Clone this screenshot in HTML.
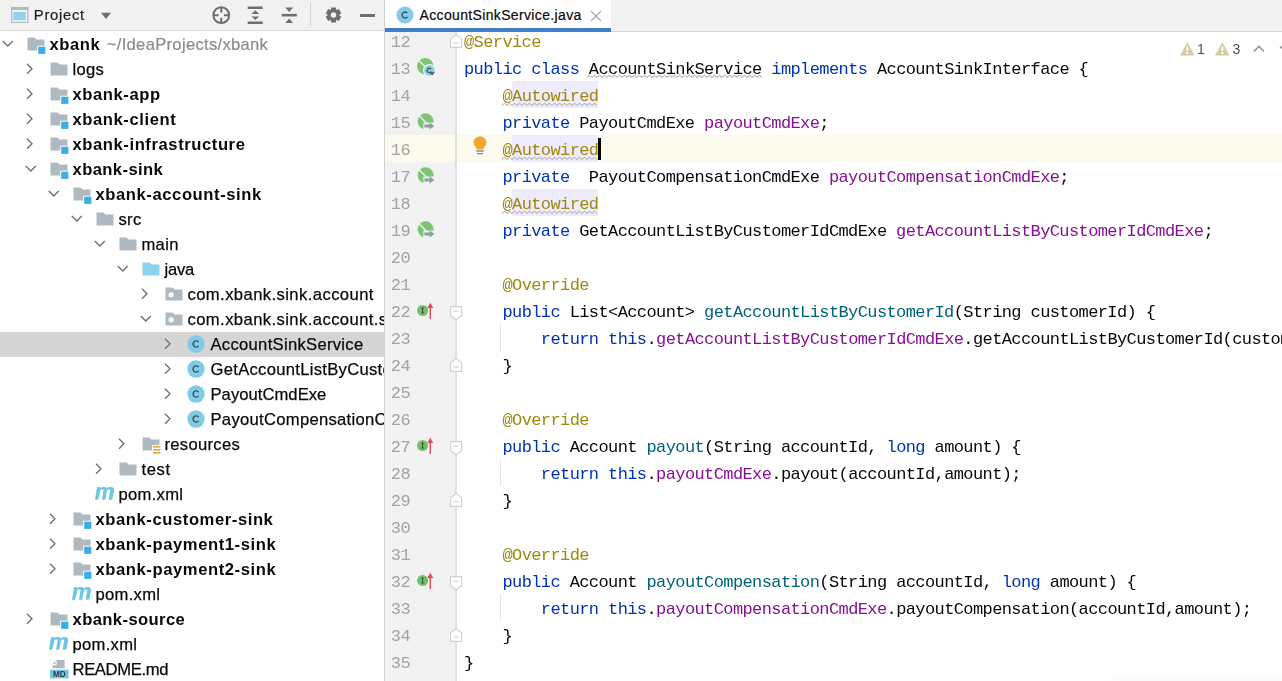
<!DOCTYPE html>
<html><head><meta charset="utf-8"><style>
*{margin:0;padding:0;box-sizing:border-box}
html,body{width:1282px;height:681px;overflow:hidden;background:#fff}
body{position:relative;font-family:"Liberation Sans",sans-serif;-webkit-font-smoothing:antialiased}
.ic{position:absolute;display:block;overflow:visible}
#left{will-change:transform;position:absolute;left:0;top:0;width:384px;height:681px;overflow:hidden;background:#fff}
#hdr{position:absolute;left:0;top:0;width:384px;height:31px;background:#f2f2f2;border-bottom:1px solid #d6d6d6}
#hdr .title{-webkit-text-stroke:0.2px currentColor;position:absolute;left:33.8px;top:5.3px;font-size:14.8px;letter-spacing:0.72px;color:#1e1e1e;line-height:20px}
.sel{position:absolute;left:0;width:384px;height:25px;background:#d5d5d5}
.t,.tb{position:absolute;height:25px;line-height:25px;font-size:16.6px;color:#0a0a0a;white-space:nowrap;letter-spacing:0.3px}
.tb{font-weight:bold;letter-spacing:0.58px}
.t{-webkit-text-stroke:0.25px currentColor}
.gr{font-weight:normal;color:#8c8c8c;letter-spacing:0.3px;-webkit-text-stroke:0.2px currentColor}
.mi{position:absolute;width:20px;height:15px;font:italic bold 21px/15px "Liberation Sans",sans-serif;color:#6cc5ea;letter-spacing:-1px}
#vsep{position:absolute;left:384px;top:0;width:1px;height:681px;background:#d1d1d1}
#tabs{position:absolute;left:385px;top:0;width:897px;height:32px;background:#f2f2f2;border-bottom:1px solid #d6d6d6}
#tab{position:absolute;left:385px;top:0;width:226px;height:32px;background:#fff}
#tabline{position:absolute;left:385px;top:28px;width:226px;height:4px;background:#3f7ecb}
#tabtxt{-webkit-text-stroke:0.2px currentColor;position:absolute;left:419.5px;top:5px;font-size:14px;line-height:20px;color:#0a0a0a;letter-spacing:0.35px}
#gutter{position:absolute;left:385px;top:32px;width:70px;height:649px;background:#f2f2f2}
#gline{position:absolute;left:455px;top:32px;width:2px;height:649px;background:#e0e0e0}
#editor{position:absolute;left:0;top:32px;width:1282px;height:649px;overflow:hidden}
#einner{will-change:transform;position:absolute;left:0;top:-32px;width:1282px;height:681px}
.cur{position:absolute;left:457px;width:826px;height:27px;background:#fcfaed}
.gcur{position:absolute;left:385px;width:70px;height:27px;background:#fcfaed}
.cl{position:absolute;left:464px;height:27px;line-height:27px;font-family:"Liberation Mono",monospace;font-size:17px;letter-spacing:-0.6px;color:#080808;white-space:pre}
.ln{position:absolute;left:385px;width:25px;text-align:right;height:27px;line-height:27px;font-family:"Liberation Mono",monospace;font-size:17px;letter-spacing:-0.6px;color:#a3a3a3}
.k{color:#0033b3} .a{color:#9e880d} .f{color:#871094} .m{color:#00627a}
.hl{background:#edebfc}
.lhl{position:absolute;height:27px;background:#edebfc}
</style></head><body>
<div id="left">
<div id="hdr">
 <svg class="ic" style="left:10.5px;top:7px" width="18" height="16" viewBox="0 0 18 16"><rect x="0.6" y="0.6" width="16.2" height="14.8" fill="#f7f7f7" stroke="#b0bac2" stroke-width="1.2"/><rect x="0" y="0" width="17.4" height="3" fill="#b0bac2"/><rect x="2.2" y="4.9" width="12.6" height="8.3" fill="#90d2ec"/></svg>
 <div class="title">Project</div>
 <svg class="ic" style="left:100px;top:12px" width="12" height="8" viewBox="0 0 12 8"><path d="M1 0.8H11L6 7Z" fill="#6e6e6e"/></svg>
 <svg class="ic" style="left:212px;top:6px" width="19" height="19" viewBox="0 0 19 19"><circle cx="9.25" cy="9.15" r="7.9" fill="none" stroke="#6e6e6e" stroke-width="2"/><path d="M9.25 1.5V6.5M9.25 11.8V17M1.5 9.15H6.5M12 9.15H17" stroke="#6e6e6e" stroke-width="2"/></svg>
 <svg class="ic" style="left:247px;top:6px" width="17" height="19" viewBox="0 0 17 19"><rect x="0.7" y="0.5" width="15" height="2.5" fill="#6e6e6e"/><rect x="0.7" y="15.5" width="15" height="2.5" fill="#6e6e6e"/><path d="M4.4 7.9H12.2L8.3 4.2Z M4.4 10.4H12.2L8.3 14.1Z" fill="#6e6e6e"/></svg>
 <svg class="ic" style="left:281px;top:6px" width="17" height="19" viewBox="0 0 17 19"><rect x="0.8" y="7.9" width="15" height="2.6" fill="#6e6e6e"/><path d="M4.3 1.6H12.1L8.2 6Z M4.3 16.9H12.1L8.2 12.4Z" fill="#6e6e6e"/></svg>
 <div style="position:absolute;left:310px;top:3px;width:1px;height:23px;background:#d0d0d0"></div>
 <svg class="ic" style="left:324.7px;top:6px" width="17" height="18" viewBox="0 0 17 18"><path fill="#6e6e6e" fill-rule="evenodd" d="M5.72 3.91 L6.07 1.43 L10.93 1.43 L11.28 3.91 L11.52 4.05 L13.84 3.11 L16.27 7.31 L14.30 8.86 L14.30 9.14 L16.27 10.69 L13.84 14.89 L11.52 13.95 L11.28 14.09 L10.93 16.57 L6.07 16.57 L5.72 14.09 L5.48 13.95 L3.16 14.89 L0.73 10.69 L2.70 9.14 L2.70 8.86 L0.73 7.31 L3.16 3.11 L5.48 4.05Z M11.30 9.00 A2.8 2.8 0 1 0 5.70 9.00 A2.8 2.8 0 1 0 11.30 9.00Z"/></svg>
 <div style="position:absolute;left:359.5px;top:14px;width:15px;height:2.5px;background:#6e6e6e"></div>
</div>
<svg class="ic" style="left:2.0px;top:40.0px" width="12" height="8" viewBox="0 0 12 8"><path d="M0.8 1L5.8 6L10.8 1" fill="none" stroke="#6e6e6e" stroke-width="1.3"/></svg><svg class="ic" style="left:26.5px;top:37.0px" width="20" height="18" viewBox="0 0 20 18"><path d="M0.5 0.5H7.5L9.5 2.5H17.5V13.5H0.5Z" fill="#afb9c1"/><rect x="10.2" y="8.7" width="9" height="9" fill="#fff"/><rect x="11.2" y="9.7" width="7.2" height="7.2" fill="#3daee3"/></svg><div class="tb" style="left:49.5px;top:32px;">xbank<span class="gr" style="margin-left:1.5px"> ~/IdeaProjects/xbank</span></div><svg class="ic" style="left:26.1px;top:62.9px" width="8" height="12" viewBox="0 0 8 12"><path d="M1 0.8L6 5.8L1 10.8" fill="none" stroke="#6e6e6e" stroke-width="1.3"/></svg><svg class="ic" style="left:49.5px;top:62.0px" width="18" height="14" viewBox="0 0 18 14"><path d="M0.5 0.5H7.5L9.5 2.5H17.5V13.5H0.5Z" fill="#afb9c1"/></svg><div class="t" style="left:72.5px;top:57px;">logs</div><svg class="ic" style="left:26.1px;top:87.9px" width="8" height="12" viewBox="0 0 8 12"><path d="M1 0.8L6 5.8L1 10.8" fill="none" stroke="#6e6e6e" stroke-width="1.3"/></svg><svg class="ic" style="left:49.5px;top:87.0px" width="20" height="18" viewBox="0 0 20 18"><path d="M0.5 0.5H7.5L9.5 2.5H17.5V13.5H0.5Z" fill="#afb9c1"/><rect x="10.2" y="8.7" width="9" height="9" fill="#fff"/><rect x="11.2" y="9.7" width="7.2" height="7.2" fill="#3daee3"/></svg><div class="tb" style="left:72.5px;top:82px;">xbank-app</div><svg class="ic" style="left:26.1px;top:112.9px" width="8" height="12" viewBox="0 0 8 12"><path d="M1 0.8L6 5.8L1 10.8" fill="none" stroke="#6e6e6e" stroke-width="1.3"/></svg><svg class="ic" style="left:49.5px;top:112.0px" width="20" height="18" viewBox="0 0 20 18"><path d="M0.5 0.5H7.5L9.5 2.5H17.5V13.5H0.5Z" fill="#afb9c1"/><rect x="10.2" y="8.7" width="9" height="9" fill="#fff"/><rect x="11.2" y="9.7" width="7.2" height="7.2" fill="#3daee3"/></svg><div class="tb" style="left:72.5px;top:107px;">xbank-client</div><svg class="ic" style="left:26.1px;top:137.9px" width="8" height="12" viewBox="0 0 8 12"><path d="M1 0.8L6 5.8L1 10.8" fill="none" stroke="#6e6e6e" stroke-width="1.3"/></svg><svg class="ic" style="left:49.5px;top:137.0px" width="20" height="18" viewBox="0 0 20 18"><path d="M0.5 0.5H7.5L9.5 2.5H17.5V13.5H0.5Z" fill="#afb9c1"/><rect x="10.2" y="8.7" width="9" height="9" fill="#fff"/><rect x="11.2" y="9.7" width="7.2" height="7.2" fill="#3daee3"/></svg><div class="tb" style="left:72.5px;top:132px;">xbank-infrastructure</div><svg class="ic" style="left:25.0px;top:165.0px" width="12" height="8" viewBox="0 0 12 8"><path d="M0.8 1L5.8 6L10.8 1" fill="none" stroke="#6e6e6e" stroke-width="1.3"/></svg><svg class="ic" style="left:49.5px;top:162.0px" width="20" height="18" viewBox="0 0 20 18"><path d="M0.5 0.5H7.5L9.5 2.5H17.5V13.5H0.5Z" fill="#afb9c1"/><rect x="10.2" y="8.7" width="9" height="9" fill="#fff"/><rect x="11.2" y="9.7" width="7.2" height="7.2" fill="#3daee3"/></svg><div class="tb" style="left:72.5px;top:157px;letter-spacing:0.4px;">xbank-sink</div><svg class="ic" style="left:48.0px;top:190.0px" width="12" height="8" viewBox="0 0 12 8"><path d="M0.8 1L5.8 6L10.8 1" fill="none" stroke="#6e6e6e" stroke-width="1.3"/></svg><svg class="ic" style="left:72.5px;top:187.0px" width="20" height="18" viewBox="0 0 20 18"><path d="M0.5 0.5H7.5L9.5 2.5H17.5V13.5H0.5Z" fill="#afb9c1"/><rect x="10.2" y="8.7" width="9" height="9" fill="#fff"/><rect x="11.2" y="9.7" width="7.2" height="7.2" fill="#3daee3"/></svg><div class="tb" style="left:95.5px;top:182px;">xbank-account-sink</div><svg class="ic" style="left:71.0px;top:215.0px" width="12" height="8" viewBox="0 0 12 8"><path d="M0.8 1L5.8 6L10.8 1" fill="none" stroke="#6e6e6e" stroke-width="1.3"/></svg><svg class="ic" style="left:95.5px;top:212.0px" width="18" height="14" viewBox="0 0 18 14"><path d="M0.5 0.5H7.5L9.5 2.5H17.5V13.5H0.5Z" fill="#afb9c1"/></svg><div class="t" style="left:118.5px;top:207px;">src</div><svg class="ic" style="left:94.0px;top:240.0px" width="12" height="8" viewBox="0 0 12 8"><path d="M0.8 1L5.8 6L10.8 1" fill="none" stroke="#6e6e6e" stroke-width="1.3"/></svg><svg class="ic" style="left:118.5px;top:237.0px" width="18" height="14" viewBox="0 0 18 14"><path d="M0.5 0.5H7.5L9.5 2.5H17.5V13.5H0.5Z" fill="#afb9c1"/></svg><div class="t" style="left:141.5px;top:232px;">main</div><svg class="ic" style="left:117.0px;top:265.0px" width="12" height="8" viewBox="0 0 12 8"><path d="M0.8 1L5.8 6L10.8 1" fill="none" stroke="#6e6e6e" stroke-width="1.3"/></svg><svg class="ic" style="left:141.5px;top:262.0px" width="18" height="14" viewBox="0 0 18 14"><path d="M0.5 0.5H7.5L9.5 2.5H17.5V13.5H0.5Z" fill="#8dd2ec"/></svg><div class="t" style="left:164.5px;top:257px;letter-spacing:-0.2px;">java</div><svg class="ic" style="left:141.1px;top:287.9px" width="8" height="12" viewBox="0 0 8 12"><path d="M1 0.8L6 5.8L1 10.8" fill="none" stroke="#6e6e6e" stroke-width="1.3"/></svg><svg class="ic" style="left:164.5px;top:287.0px" width="18" height="14" viewBox="0 0 18 14"><path d="M0.5 0.5H7.5L9.5 2.5H17.5V13.5H0.5Z" fill="#afb9c1"/><circle cx="6.2" cy="7.8" r="2.6" fill="#fff"/></svg><div class="t" style="left:187.5px;top:282px;letter-spacing:0.42px;">com.xbank.sink.account</div><svg class="ic" style="left:140.0px;top:315.0px" width="12" height="8" viewBox="0 0 12 8"><path d="M0.8 1L5.8 6L10.8 1" fill="none" stroke="#6e6e6e" stroke-width="1.3"/></svg><svg class="ic" style="left:164.5px;top:312.0px" width="18" height="14" viewBox="0 0 18 14"><path d="M0.5 0.5H7.5L9.5 2.5H17.5V13.5H0.5Z" fill="#afb9c1"/><circle cx="6.2" cy="7.8" r="2.6" fill="#fff"/></svg><div class="t" style="left:187.5px;top:307px;letter-spacing:0.42px;">com.xbank.sink.account.service</div><div class="sel" style="top:332px"></div><svg class="ic" style="left:164.1px;top:337.9px" width="8" height="12" viewBox="0 0 8 12"><path d="M1 0.8L6 5.8L1 10.8" fill="none" stroke="#6e6e6e" stroke-width="1.3"/></svg><svg class="ic" style="left:186.9px;top:334.5px" width="18" height="18" viewBox="0 0 18 18"><circle cx="9" cy="9" r="8.7" fill="#80cbe6"/><path d="M11.6 7.1A3.1 3.1 0 1 0 11.6 10.9" fill="none" stroke="#3e4f57" stroke-width="1.4"/></svg><div class="t" style="left:210.5px;top:332px;">AccountSinkService</div><svg class="ic" style="left:164.1px;top:362.9px" width="8" height="12" viewBox="0 0 8 12"><path d="M1 0.8L6 5.8L1 10.8" fill="none" stroke="#6e6e6e" stroke-width="1.3"/></svg><svg class="ic" style="left:186.9px;top:359.5px" width="18" height="18" viewBox="0 0 18 18"><circle cx="9" cy="9" r="8.7" fill="#80cbe6"/><path d="M11.6 7.1A3.1 3.1 0 1 0 11.6 10.9" fill="none" stroke="#3e4f57" stroke-width="1.4"/></svg><div class="t" style="left:210.5px;top:357px;">GetAccountListByCustomerIdCmdExe</div><svg class="ic" style="left:164.1px;top:387.9px" width="8" height="12" viewBox="0 0 8 12"><path d="M1 0.8L6 5.8L1 10.8" fill="none" stroke="#6e6e6e" stroke-width="1.3"/></svg><svg class="ic" style="left:186.9px;top:384.5px" width="18" height="18" viewBox="0 0 18 18"><circle cx="9" cy="9" r="8.7" fill="#80cbe6"/><path d="M11.6 7.1A3.1 3.1 0 1 0 11.6 10.9" fill="none" stroke="#3e4f57" stroke-width="1.4"/></svg><div class="t" style="left:210.5px;top:382px;letter-spacing:0.05px;">PayoutCmdExe</div><svg class="ic" style="left:164.1px;top:412.9px" width="8" height="12" viewBox="0 0 8 12"><path d="M1 0.8L6 5.8L1 10.8" fill="none" stroke="#6e6e6e" stroke-width="1.3"/></svg><svg class="ic" style="left:186.9px;top:409.5px" width="18" height="18" viewBox="0 0 18 18"><circle cx="9" cy="9" r="8.7" fill="#80cbe6"/><path d="M11.6 7.1A3.1 3.1 0 1 0 11.6 10.9" fill="none" stroke="#3e4f57" stroke-width="1.4"/></svg><div class="t" style="left:210.5px;top:407px;">PayoutCompensationCmdExe</div><svg class="ic" style="left:118.1px;top:437.9px" width="8" height="12" viewBox="0 0 8 12"><path d="M1 0.8L6 5.8L1 10.8" fill="none" stroke="#6e6e6e" stroke-width="1.3"/></svg><svg class="ic" style="left:141.5px;top:437.0px" width="20" height="18" viewBox="0 0 20 18"><path d="M0.5 0.5H7.5L9.5 2.5H17.5V13.5H0.5Z" fill="#afb9c1"/><rect x="10" y="8" width="10" height="10" fill="#fff"/><rect x="11" y="9" width="7.5" height="1.6" fill="#e3a440"/><rect x="11" y="12" width="7.5" height="1.6" fill="#e3a440"/><rect x="11" y="15" width="7.5" height="1.6" fill="#e3a440"/></svg><div class="t" style="left:164.5px;top:432px;">resources</div><svg class="ic" style="left:95.1px;top:462.9px" width="8" height="12" viewBox="0 0 8 12"><path d="M1 0.8L6 5.8L1 10.8" fill="none" stroke="#6e6e6e" stroke-width="1.3"/></svg><svg class="ic" style="left:118.5px;top:462.0px" width="18" height="14" viewBox="0 0 18 14"><path d="M0.5 0.5H7.5L9.5 2.5H17.5V13.5H0.5Z" fill="#afb9c1"/></svg><div class="t" style="left:141.5px;top:457px;letter-spacing:0.6px;">test</div><svg class="ic" style="left:94.9px;top:487.2px" width="20" height="13" viewBox="0 0 20 13"><path d="M0 12.7L2.1 0L5.2 0L5.05 0.9C6 0.3 7.3 0 8.6 0C10.2 0 11.3 0.5 11.7 1.4C12.8 0.4 14.2 0 15.7 0C18.2 0 19.4 1.3 19.1 3.2L17.2 12.7L13.6 12.7L15.1 3.8C15.2 3 14.8 2.6 14 2.6C13.1 2.6 12.2 3.1 11.9 3.9L10.2 12.7L7 12.7L8.5 3.8C8.6 3 8.2 2.6 7.4 2.6C6.5 2.6 5.6 3.1 5.3 3.9L3.1 12.7Z" fill="#6cc6e8"/></svg><div class="t" style="left:118.5px;top:482px;">pom.xml</div><svg class="ic" style="left:49.1px;top:512.9px" width="8" height="12" viewBox="0 0 8 12"><path d="M1 0.8L6 5.8L1 10.8" fill="none" stroke="#6e6e6e" stroke-width="1.3"/></svg><svg class="ic" style="left:72.5px;top:512.0px" width="20" height="18" viewBox="0 0 20 18"><path d="M0.5 0.5H7.5L9.5 2.5H17.5V13.5H0.5Z" fill="#afb9c1"/><rect x="10.2" y="8.7" width="9" height="9" fill="#fff"/><rect x="11.2" y="9.7" width="7.2" height="7.2" fill="#3daee3"/></svg><div class="tb" style="left:95.5px;top:507px;">xbank-customer-sink</div><svg class="ic" style="left:49.1px;top:537.9px" width="8" height="12" viewBox="0 0 8 12"><path d="M1 0.8L6 5.8L1 10.8" fill="none" stroke="#6e6e6e" stroke-width="1.3"/></svg><svg class="ic" style="left:72.5px;top:537.0px" width="20" height="18" viewBox="0 0 20 18"><path d="M0.5 0.5H7.5L9.5 2.5H17.5V13.5H0.5Z" fill="#afb9c1"/><rect x="10.2" y="8.7" width="9" height="9" fill="#fff"/><rect x="11.2" y="9.7" width="7.2" height="7.2" fill="#3daee3"/></svg><div class="tb" style="left:95.5px;top:532px;">xbank-payment1-sink</div><svg class="ic" style="left:49.1px;top:562.9px" width="8" height="12" viewBox="0 0 8 12"><path d="M1 0.8L6 5.8L1 10.8" fill="none" stroke="#6e6e6e" stroke-width="1.3"/></svg><svg class="ic" style="left:72.5px;top:562.0px" width="20" height="18" viewBox="0 0 20 18"><path d="M0.5 0.5H7.5L9.5 2.5H17.5V13.5H0.5Z" fill="#afb9c1"/><rect x="10.2" y="8.7" width="9" height="9" fill="#fff"/><rect x="11.2" y="9.7" width="7.2" height="7.2" fill="#3daee3"/></svg><div class="tb" style="left:95.5px;top:557px;">xbank-payment2-sink</div><svg class="ic" style="left:71.9px;top:587.2px" width="20" height="13" viewBox="0 0 20 13"><path d="M0 12.7L2.1 0L5.2 0L5.05 0.9C6 0.3 7.3 0 8.6 0C10.2 0 11.3 0.5 11.7 1.4C12.8 0.4 14.2 0 15.7 0C18.2 0 19.4 1.3 19.1 3.2L17.2 12.7L13.6 12.7L15.1 3.8C15.2 3 14.8 2.6 14 2.6C13.1 2.6 12.2 3.1 11.9 3.9L10.2 12.7L7 12.7L8.5 3.8C8.6 3 8.2 2.6 7.4 2.6C6.5 2.6 5.6 3.1 5.3 3.9L3.1 12.7Z" fill="#6cc6e8"/></svg><div class="t" style="left:95.5px;top:582px;">pom.xml</div><svg class="ic" style="left:26.1px;top:612.9px" width="8" height="12" viewBox="0 0 8 12"><path d="M1 0.8L6 5.8L1 10.8" fill="none" stroke="#6e6e6e" stroke-width="1.3"/></svg><svg class="ic" style="left:49.5px;top:612.0px" width="20" height="18" viewBox="0 0 20 18"><path d="M0.5 0.5H7.5L9.5 2.5H17.5V13.5H0.5Z" fill="#afb9c1"/><rect x="10.2" y="8.7" width="9" height="9" fill="#fff"/><rect x="11.2" y="9.7" width="7.2" height="7.2" fill="#3daee3"/></svg><div class="tb" style="left:72.5px;top:607px;letter-spacing:0.4px;">xbank-source</div><svg class="ic" style="left:48.9px;top:637.2px" width="20" height="13" viewBox="0 0 20 13"><path d="M0 12.7L2.1 0L5.2 0L5.05 0.9C6 0.3 7.3 0 8.6 0C10.2 0 11.3 0.5 11.7 1.4C12.8 0.4 14.2 0 15.7 0C18.2 0 19.4 1.3 19.1 3.2L17.2 12.7L13.6 12.7L15.1 3.8C15.2 3 14.8 2.6 14 2.6C13.1 2.6 12.2 3.1 11.9 3.9L10.2 12.7L7 12.7L8.5 3.8C8.6 3 8.2 2.6 7.4 2.6C6.5 2.6 5.6 3.1 5.3 3.9L3.1 12.7Z" fill="#6cc6e8"/></svg><div class="t" style="left:72.5px;top:632px;">pom.xml</div><svg class="ic" style="left:49.5px;top:659.5px" width="20" height="20" viewBox="0 0 20 20"><path d="M6.6 0H14.7V8.2H2.6V4Z" fill="#afb9c1"/><path d="M6 0.6V4.6H2" fill="none" stroke="#fff" stroke-width="1.2"/><rect x="0" y="9.7" width="18.6" height="8.7" fill="#75c7e8"/><text x="9.3" y="17.2" font-family="Liberation Sans" font-weight="bold" font-size="8.2" text-anchor="middle" fill="#2d3b42">MD</text></svg><div class="t" style="left:72.5px;top:657px;letter-spacing:-0.35px;">README.md</div>
</div>
<div id="vsep"></div>
<div id="tabs"></div>
<div id="tab"></div>
<div id="tabline"></div>
<svg class="ic" style="left:396px;top:6px" width="18" height="18" viewBox="0 0 18 18"><circle cx="9" cy="9" r="8.6" fill="#84cde8"/><path d="M11.5 7.2A3 3 0 1 0 11.5 10.8" fill="none" stroke="#3e4f57" stroke-width="1.4"/></svg>
<div id="tabtxt">AccountSinkService.java</div>
<svg class="ic" style="left:590px;top:10px" width="12" height="12" viewBox="0 0 12 12"><path d="M1 1L11 11M11 1L1 11" stroke="#a8a8a8" stroke-width="1.2"/></svg>
<div id="editor"><div id="einner">
<div id="gutter" style="top:32px"></div>
<div class="ln" style="top:29px">12</div><div class="ln" style="top:56px">13</div><div class="ln" style="top:83px">14</div><div class="ln" style="top:110px">15</div><div class="gcur" style="top:135px"></div><div class="ln" style="top:137px">16</div><div class="ln" style="top:164px">17</div><div class="ln" style="top:191px">18</div><div class="ln" style="top:218px">19</div><div class="ln" style="top:245px">20</div><div class="ln" style="top:272px">21</div><div class="ln" style="top:299px">22</div><div class="ln" style="top:326px">23</div><div class="ln" style="top:353px">24</div><div class="ln" style="top:380px">25</div><div class="ln" style="top:407px">26</div><div class="ln" style="top:434px">27</div><div class="ln" style="top:461px">28</div><div class="ln" style="top:488px">29</div><div class="ln" style="top:515px">30</div><div class="ln" style="top:542px">31</div><div class="ln" style="top:569px">32</div><div class="ln" style="top:596px">33</div><div class="ln" style="top:623px">34</div><div class="ln" style="top:650px">35</div>
<div class="cl" style="top:29px"><span class="a">@Service</span></div><div class="cl" style="top:56px"><span class="k">public</span> <span class="k">class</span> <span class="w">AccountSinkService</span> <span class="k">implements</span> AccountSinkInterface {</div><div class="lhl" style="left:512.0px;top:81px;width:86.39999999999999px"></div><div class="cl" style="top:83px">    <span class="a">@Autowired</span></div><div class="cl" style="top:110px">    <span class="k">private</span> PayoutCmdExe <span class="f">payoutCmdExe</span>;</div><div class="cur" style="top:135px"></div><div class="lhl" style="left:512.0px;top:135px;width:86.39999999999999px"></div><div class="cl" style="top:137px">    <span class="a">@Autowired</span></div><div class="cl" style="top:164px">    <span class="k">private</span>  PayoutCompensationCmdExe <span class="f">payoutCompensationCmdExe</span>;</div><div class="lhl" style="left:512.0px;top:189px;width:86.39999999999999px"></div><div class="cl" style="top:191px">    <span class="a">@Autowired</span></div><div class="cl" style="top:218px">    <span class="k">private</span> GetAccountListByCustomerIdCmdExe <span class="f">getAccountListByCustomerIdCmdExe</span>;</div><div class="cl" style="top:245px"></div><div class="cl" style="top:272px">    <span class="a">@Override</span></div><div class="cl" style="top:299px">    <span class="k">public</span> List&lt;Account&gt; <span class="m">getAccountListByCustomerId</span>(String customerId) {</div><div class="cl" style="top:326px">        <span class="k">return</span> <span class="k">this</span>.<span class="f">getAccountListByCustomerIdCmdExe</span>.getAccountListByCustomerId(customerId);</div><div class="cl" style="top:353px">    }</div><div class="cl" style="top:380px"></div><div class="cl" style="top:407px">    <span class="a">@Override</span></div><div class="cl" style="top:434px">    <span class="k">public</span> Account <span class="m">payout</span>(String accountId, <span class="k">long</span> amount) {</div><div class="cl" style="top:461px">        <span class="k">return</span> <span class="k">this</span>.<span class="f">payoutCmdExe</span>.payout(accountId,amount);</div><div class="cl" style="top:488px">    }</div><div class="cl" style="top:515px"></div><div class="cl" style="top:542px">    <span class="a">@Override</span></div><div class="cl" style="top:569px">    <span class="k">public</span> Account <span class="m">payoutCompensation</span>(String accountId, <span class="k">long</span> amount) {</div><div class="cl" style="top:596px">        <span class="k">return</span> <span class="k">this</span>.<span class="f">payoutCompensationCmdExe</span>.payoutCompensation(accountId,amount);</div><div class="cl" style="top:623px">    }</div><div class="cl" style="top:650px">}</div><div class="cl" style="top:677px"></div>
<svg class="ic" style="left:502.4px;top:101.5px" width="96" height="5" viewBox="0 0 96 5"><path d="M0 3.5L2.5 1.2L5 3.5L7.5 1.2L10 3.5L12.5 1.2L15 3.5L17.5 1.2L20 3.5L22.5 1.2L25 3.5L27.5 1.2L30 3.5L32.5 1.2L35 3.5L37.5 1.2L40 3.5L42.5 1.2L45 3.5L47.5 1.2L50 3.5L52.5 1.2L55 3.5L57.5 1.2L60 3.5L62.5 1.2L65 3.5L67.5 1.2L70 3.5L72.5 1.2L75 3.5L77.5 1.2L80 3.5L82.5 1.2L85 3.5L87.5 1.2L90 3.5L92.5 1.2L95 3.5" fill="none" stroke="#bdbdbd" stroke-width="1.1"/></svg><svg class="ic" style="left:502.4px;top:155.5px" width="96" height="5" viewBox="0 0 96 5"><path d="M0 3.5L2.5 1.2L5 3.5L7.5 1.2L10 3.5L12.5 1.2L15 3.5L17.5 1.2L20 3.5L22.5 1.2L25 3.5L27.5 1.2L30 3.5L32.5 1.2L35 3.5L37.5 1.2L40 3.5L42.5 1.2L45 3.5L47.5 1.2L50 3.5L52.5 1.2L55 3.5L57.5 1.2L60 3.5L62.5 1.2L65 3.5L67.5 1.2L70 3.5L72.5 1.2L75 3.5L77.5 1.2L80 3.5L82.5 1.2L85 3.5L87.5 1.2L90 3.5L92.5 1.2L95 3.5" fill="none" stroke="#bdbdbd" stroke-width="1.1"/></svg><svg class="ic" style="left:502.4px;top:209.5px" width="96" height="5" viewBox="0 0 96 5"><path d="M0 3.5L2.5 1.2L5 3.5L7.5 1.2L10 3.5L12.5 1.2L15 3.5L17.5 1.2L20 3.5L22.5 1.2L25 3.5L27.5 1.2L30 3.5L32.5 1.2L35 3.5L37.5 1.2L40 3.5L42.5 1.2L45 3.5L47.5 1.2L50 3.5L52.5 1.2L55 3.5L57.5 1.2L60 3.5L62.5 1.2L65 3.5L67.5 1.2L70 3.5L72.5 1.2L75 3.5L77.5 1.2L80 3.5L82.5 1.2L85 3.5L87.5 1.2L90 3.5L92.5 1.2L95 3.5" fill="none" stroke="#bdbdbd" stroke-width="1.1"/></svg><svg class="ic" style="left:587.3px;top:74px" width="171.79999999999998" height="5" viewBox="0 0 171.79999999999998 5"><path d="M0 3.5L2.5 1.2L5.0 3.5L7.5 1.2L10.0 3.5L12.5 1.2L15.0 3.5L17.5 1.2L20.0 3.5L22.5 1.2L25.0 3.5L27.5 1.2L30.0 3.5L32.5 1.2L35.0 3.5L37.5 1.2L40.0 3.5L42.5 1.2L45.0 3.5L47.5 1.2L50.0 3.5L52.5 1.2L55.0 3.5L57.5 1.2L60.0 3.5L62.5 1.2L65.0 3.5L67.5 1.2L70.0 3.5L72.5 1.2L75.0 3.5L77.5 1.2L80.0 3.5L82.5 1.2L85.0 3.5L87.5 1.2L90.0 3.5L92.5 1.2L95.0 3.5L97.5 1.2L100.0 3.5L102.5 1.2L105.0 3.5L107.5 1.2L110.0 3.5L112.5 1.2L115.0 3.5L117.5 1.2L120.0 3.5L122.5 1.2L125.0 3.5L127.5 1.2L130.0 3.5L132.5 1.2L135.0 3.5L137.5 1.2L140.0 3.5L142.5 1.2L145.0 3.5L147.5 1.2L150.0 3.5L152.5 1.2L155.0 3.5L157.5 1.2L160.0 3.5L162.5 1.2L165.0 3.5L167.5 1.2L170.0 3.5L172.5 1.2L175.0 3.5" fill="none" stroke="#bdbdbd" stroke-width="1.1"/></svg>
<div id="gline"></div>
<svg class="ic" style="left:416.5px;top:57.5px" width="19" height="19" viewBox="0 0 19 19"><circle cx="8.3" cy="8.3" r="8.2" fill="#7cc474"/><path d="M1.8 2.6L9.4 10" stroke="#f2f2f2" stroke-width="1.4"/><circle cx="12.4" cy="12.4" r="6.4" fill="#f2f2f2"/><circle cx="12.4" cy="12.4" r="5.2" fill="#84cde8"/><path d="M14.2 11.2A2.2 2.2 0 1 0 14.2 13.6" fill="none" stroke="#3e4f57" stroke-width="1.2"/><path d="M12.2 14.2H18L15.1 17.6Z" fill="#555"/></svg><svg class="ic" style="left:416.8px;top:112.5px" width="19" height="18" viewBox="0 0 19 18"><circle cx="8.6" cy="8.3" r="8" fill="#7cc474"/><path d="M1.8 2.6L9.6 10.2" stroke="#f2f2f2" stroke-width="1.4"/><path d="M6.4 9.6H18V18H6.4Z" fill="#f2f2f2"/><path d="M7.4 11.6H12.6V9.6L17.4 13L12.6 16.4V14.4H7.4Z" fill="#909ca6"/></svg><svg class="ic" style="left:416.8px;top:166.5px" width="19" height="18" viewBox="0 0 19 18"><circle cx="8.6" cy="8.3" r="8" fill="#7cc474"/><path d="M1.8 2.6L9.6 10.2" stroke="#f2f2f2" stroke-width="1.4"/><path d="M6.4 9.6H18V18H6.4Z" fill="#f2f2f2"/><path d="M7.4 11.6H12.6V9.6L17.4 13L12.6 16.4V14.4H7.4Z" fill="#909ca6"/></svg><svg class="ic" style="left:416.8px;top:220.5px" width="19" height="18" viewBox="0 0 19 18"><circle cx="8.6" cy="8.3" r="8" fill="#7cc474"/><path d="M1.8 2.6L9.6 10.2" stroke="#f2f2f2" stroke-width="1.4"/><path d="M6.4 9.6H18V18H6.4Z" fill="#f2f2f2"/><path d="M7.4 11.6H12.6V9.6L17.4 13L12.6 16.4V14.4H7.4Z" fill="#909ca6"/></svg><svg class="ic" style="left:417px;top:302px" width="18" height="18" viewBox="0 0 18 18"><circle cx="5.6" cy="8.5" r="5.5" fill="#72bf6b"/><path d="M4.5 6H6.7M5.6 6V11M4.5 11H6.7" stroke="#333" stroke-width="0.9"/><path d="M13.3 17V2.5" stroke="#db4d58" stroke-width="1.4"/><path d="M10.3 6L13.3 0.8L16.3 6Z" fill="#db4d58"/></svg><svg class="ic" style="left:450px;top:305.8px" width="13" height="15" viewBox="0 0 13 15"><path d="M0.6 0.6H11.6V9.4L6.1 13.8L0.6 9.4Z" fill="#fff" stroke="#cfcfcf" stroke-width="1.1"/><path d="M3.6 5.3H8.6" stroke="#cfcfcf" stroke-width="1.1"/></svg><svg class="ic" style="left:417px;top:437px" width="18" height="18" viewBox="0 0 18 18"><circle cx="5.6" cy="8.5" r="5.5" fill="#72bf6b"/><path d="M4.5 6H6.7M5.6 6V11M4.5 11H6.7" stroke="#333" stroke-width="0.9"/><path d="M13.3 17V2.5" stroke="#db4d58" stroke-width="1.4"/><path d="M10.3 6L13.3 0.8L16.3 6Z" fill="#db4d58"/></svg><svg class="ic" style="left:450px;top:440.8px" width="13" height="15" viewBox="0 0 13 15"><path d="M0.6 0.6H11.6V9.4L6.1 13.8L0.6 9.4Z" fill="#fff" stroke="#cfcfcf" stroke-width="1.1"/><path d="M3.6 5.3H8.6" stroke="#cfcfcf" stroke-width="1.1"/></svg><svg class="ic" style="left:417px;top:572px" width="18" height="18" viewBox="0 0 18 18"><circle cx="5.6" cy="8.5" r="5.5" fill="#72bf6b"/><path d="M4.5 6H6.7M5.6 6V11M4.5 11H6.7" stroke="#333" stroke-width="0.9"/><path d="M13.3 17V2.5" stroke="#db4d58" stroke-width="1.4"/><path d="M10.3 6L13.3 0.8L16.3 6Z" fill="#db4d58"/></svg><svg class="ic" style="left:450px;top:575.8px" width="13" height="15" viewBox="0 0 13 15"><path d="M0.6 0.6H11.6V9.4L6.1 13.8L0.6 9.4Z" fill="#fff" stroke="#cfcfcf" stroke-width="1.1"/><path d="M3.6 5.3H8.6" stroke="#cfcfcf" stroke-width="1.1"/></svg><svg class="ic" style="left:450px;top:358px" width="13" height="15" viewBox="0 0 13 15"><path d="M0.6 13.4H11.6V4.8L6.1 0.6L0.6 4.8Z" fill="#fff" stroke="#cfcfcf" stroke-width="1.1"/><path d="M3.6 8.9H8.6" stroke="#cfcfcf" stroke-width="1.1"/></svg><svg class="ic" style="left:450px;top:493px" width="13" height="15" viewBox="0 0 13 15"><path d="M0.6 13.4H11.6V4.8L6.1 0.6L0.6 4.8Z" fill="#fff" stroke="#cfcfcf" stroke-width="1.1"/><path d="M3.6 8.9H8.6" stroke="#cfcfcf" stroke-width="1.1"/></svg><svg class="ic" style="left:450px;top:628px" width="13" height="15" viewBox="0 0 13 15"><path d="M0.6 13.4H11.6V4.8L6.1 0.6L0.6 4.8Z" fill="#fff" stroke="#cfcfcf" stroke-width="1.1"/><path d="M3.6 8.9H8.6" stroke="#cfcfcf" stroke-width="1.1"/></svg><svg class="ic" style="left:449.5px;top:33.5px" width="13" height="15" viewBox="0 0 13 15"><path d="M0.6 13.4H11.6V4.8L6.1 0.6L0.6 4.8Z" fill="#fff" stroke="#cfcfcf" stroke-width="1.1"/><path d="M3.6 8.9H8.6" stroke="#cfcfcf" stroke-width="1.1"/></svg><div style="position:absolute;left:500px;top:324px;width:1px;height:27px;background:#e6e6e6"></div><div style="position:absolute;left:500px;top:459px;width:1px;height:27px;background:#e6e6e6"></div><div style="position:absolute;left:500px;top:594px;width:1px;height:27px;background:#e6e6e6"></div><svg class="ic" style="left:473px;top:136px" width="14" height="19" viewBox="0 0 14 19"><path d="M7 0.4C10.6 0.4 13.4 3 13.4 6.4C13.4 8.6 12.2 10 10.9 11.4C10.2 12.2 10 12.8 10 13.6H4C4 12.8 3.8 12.2 3.1 11.4C1.8 10 0.6 8.6 0.6 6.4C0.6 3 3.4 0.4 7 0.4Z" fill="#f0a630"/><path d="M3.2 15H10.8M4 17.6H10" stroke="#8c8c8c" stroke-width="1.3"/></svg><div style="position:absolute;left:598px;top:138px;width:3px;height:22px;background:#000"></div><svg class="ic" style="left:1179.5px;top:42px" width="15" height="14" viewBox="0 0 15 14"><path d="M7.3 0.3L14.6 13.4H0Z" fill="#d6cba3"/><rect x="6.4" y="4.6" width="1.9" height="4.2" fill="#fff"/><rect x="6.4" y="10" width="1.9" height="1.9" fill="#fff"/></svg><div style="position:absolute;left:1197px;top:40px;font-size:14px;line-height:18px;color:#505050">1</div><svg class="ic" style="left:1214.5px;top:42px" width="15" height="14" viewBox="0 0 15 14"><path d="M7.3 0.3L14.6 13.4H0Z" fill="#d6cba3"/><rect x="6.4" y="4.6" width="1.9" height="4.2" fill="#fff"/><rect x="6.4" y="10" width="1.9" height="1.9" fill="#fff"/></svg><div style="position:absolute;left:1232.5px;top:40px;font-size:14px;line-height:18px;color:#505050">3</div><svg class="ic" style="left:1253px;top:45px" width="12" height="8" viewBox="0 0 12 8"><path d="M1 6.4L5.9 1.2L10.8 6.4" fill="none" stroke="#8e8e8e" stroke-width="1.4"/></svg><svg class="ic" style="left:1279px;top:45px" width="12" height="8" viewBox="0 0 12 8"><path d="M1 1.2L5.9 6.4L10.8 1.2" fill="none" stroke="#8e8e8e" stroke-width="1.4"/></svg>
<div style="position:absolute;left:1110px;top:688px;width:200px;height:40px;border-radius:8px;box-shadow:0 0 14px 4px rgba(0,0,0,0.07);background:#fff"></div>
</div></div>
</body></html>
